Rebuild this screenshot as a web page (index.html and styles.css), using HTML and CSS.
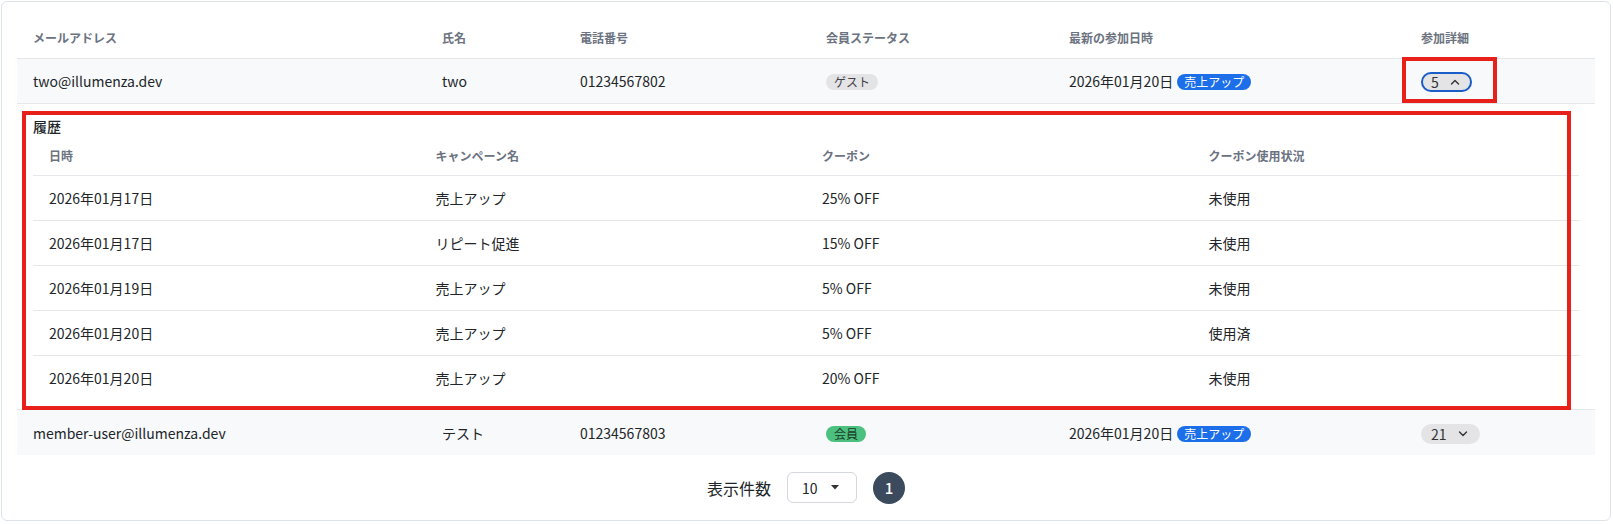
FILE: index.html
```html
<!DOCTYPE html>
<html lang="ja">
<head>
<meta charset="utf-8">
<link rel="stylesheet" href="styles.css">
</head>
<body>
<div class="card">
  <table class="main">
    <colgroup>
      <col class="c-mail"><col class="c-name"><col class="c-tel"><col class="c-status"><col class="c-date"><col class="c-detail">
    </colgroup>
    <thead>
      <tr>
        <th>メールアドレス</th><th>氏名</th><th>電話番号</th><th>会員ステータス</th><th>最新の参加日時</th><th>参加詳細</th>
      </tr>
    </thead>
    <tbody>
      <tr class="row">
        <td>two@illumenza.dev</td>
        <td>two</td>
        <td>01234567802</td>
        <td><span class="badge guest">ゲスト</span></td>
        <td>2026年01月20日<span class="badge camp">売上アップ</span></td>
        <td><button class="pill active">5<svg class="chev" viewBox="0 0 10 6" width="10" height="6"><polyline points="1.5,5 5,1.5 8.5,5" fill="none" stroke="#333" stroke-width="1.4" stroke-linecap="round" stroke-linejoin="round"/></svg></button></td>
      </tr>
      <tr class="expand">
        <td colspan="6">
          <div class="hist-title">履歴</div>
          <table class="sub">
            <thead>
              <tr><th>日時</th><th>キャンペーン名</th><th>クーポン</th><th>クーポン使用状況</th></tr>
            </thead>
            <tbody>
              <tr><td>2026年01月17日</td><td>売上アップ</td><td>25% OFF</td><td>未使用</td></tr>
              <tr><td>2026年01月17日</td><td>リピート促進</td><td>15% OFF</td><td>未使用</td></tr>
              <tr><td>2026年01月19日</td><td>売上アップ</td><td>5% OFF</td><td>未使用</td></tr>
              <tr><td>2026年01月20日</td><td>売上アップ</td><td>5% OFF</td><td>使用済</td></tr>
              <tr><td>2026年01月20日</td><td>売上アップ</td><td>20% OFF</td><td>未使用</td></tr>
            </tbody>
          </table>
        </td>
      </tr>
      <tr class="row last">
        <td>member-user@illumenza.dev</td>
        <td>テスト</td>
        <td>01234567803</td>
        <td><span class="badge member">会員</span></td>
        <td>2026年01月20日<span class="badge camp">売上アップ</span></td>
        <td><button class="pill">21<svg class="chev" viewBox="0 0 10 6" width="10" height="6"><polyline points="1.5,1 5,4.5 8.5,1" fill="none" stroke="#333" stroke-width="1.4" stroke-linecap="round" stroke-linejoin="round"/></svg></button></td>
      </tr>
    </tbody>
  </table>
  <div class="pager">
    <span class="pager-label">表示件数</span>
    <div class="select"><span>10</span><svg viewBox="0 0 10 5" width="10" height="5"><polygon points="1,0 9,0 5,4.5" fill="#333"/></svg></div>
    <span class="page">1</span>
  </div>
</div>
<div class="mark mark-btn"></div>
<div class="mark mark-hist"></div>
</body>
</html>
```
FILE: styles.css
```css
* { box-sizing: border-box; }
html, body { margin: 0; padding: 0; background: #fff; }
body {
  position: relative;
  padding: 1px 2px 1px 1px;
  font-family: "Noto Sans CJK JP", "Noto Sans", sans-serif;
  color: #212529;
  font-size: 14px;
}
.card {
  border: 1px solid #dde3ea;
  border-radius: 6px;
  padding: 15px 15px 16px;
  background: #fff;
}
.main {
  width: 100%;
  border-collapse: collapse;
  table-layout: fixed;
}
.c-mail { width: 409px; }
.c-name { width: 138px; }
.c-tel { width: 246px; }
.c-status { width: 243px; }
.c-date { width: 352px; }
.c-detail { width: 190px; }
.main > thead th {
  text-align: left;
  padding: 12px 16px 11px;
  font-size: 12px;
  line-height: 18px;
  font-weight: 600;
  color: #6b7280;
  border-bottom: 1px solid #e5e7eb;
}
.row td {
  height: 45px;
  padding: 0 16px;
  vertical-align: middle;
  background: #f8f9fa;
  border-bottom: 1px solid #e5e7eb;
  font-size: 14px;
  white-space: nowrap;
}
.row.last td { border-bottom: none; padding-top: 1px; }
.badge {
  display: inline-block;
  height: 16px;
  line-height: 16px;
  padding: 0 8px;
  border-radius: 8px;
  font-size: 12px;
  vertical-align: middle;
  position: relative;
  top: -1px;
}
.guest { background: #e4e4e7; color: #3f3f46; }
.member { background: #4cc17f; color: #1b3a28; }
.camp { background: #1c6fe8; color: #fff; padding: 0 7px; margin-left: 4px; }
.pill {
  display: inline-flex;
  align-items: center;
  gap: 11px;
  height: 20px;
  padding: 0 12px 0 10px;
  border: none;
  border-radius: 10px;
  background: #e4e4e7;
  font-family: inherit;
  font-size: 14px;
  color: #333;
  vertical-align: middle;
}
.pill.active { box-shadow: inset 0 0 0 2px #1a5cc8; }
.chev { display: block; }
.expand > td {
  padding: 12px 16px 9px;
  background: #fff;
  border-bottom: 1px solid #e5e7eb;
}
.hist-title {
  font-size: 14px;
  line-height: 20px;
  font-weight: 500;
  color: #212529;
}
.sub {
  width: 100%;
  border-collapse: collapse;
  table-layout: fixed;
}
.sub th {
  height: 39px;
  padding: 0 16px;
  text-align: left;
  vertical-align: middle;
  font-size: 12px;
  font-weight: 600;
  color: #6b7280;
  border-bottom: 1px solid #e5e7eb;
}
.sub td {
  height: 45px;
  padding: 0 16px;
  vertical-align: middle;
  font-size: 14px;
  border-bottom: 1px solid #e5e7eb;
}
.sub tbody tr:last-child td { border-bottom: none; }
.pager {
  display: flex;
  justify-content: center;
  align-items: center;
  gap: 16px;
  padding-top: 17px;
}
.pager-label { font-size: 16px; color: #212529; }
.select {
  display: flex;
  align-items: center;
  justify-content: space-between;
  width: 70px;
  height: 31px;
  padding: 0 16px 0 14px;
  border: 1px solid #d4d7dc;
  border-radius: 6px;
  font-size: 14px;
}
.select svg { display: block; }
.page {
  display: flex;
  align-items: center;
  justify-content: center;
  width: 32px;
  height: 32px;
  border-radius: 50%;
  background: #3b4a5d;
  color: #fff;
  font-size: 15px;
  font-weight: 500;
}
.mark {
  position: absolute;
  border: 4px solid #e8201a;
  pointer-events: none;
}
.mark-btn { left: 1402px; top: 57px; width: 95px; height: 46px; }
.mark-hist { left: 22px; top: 111px; width: 1549px; height: 299px; }
```
